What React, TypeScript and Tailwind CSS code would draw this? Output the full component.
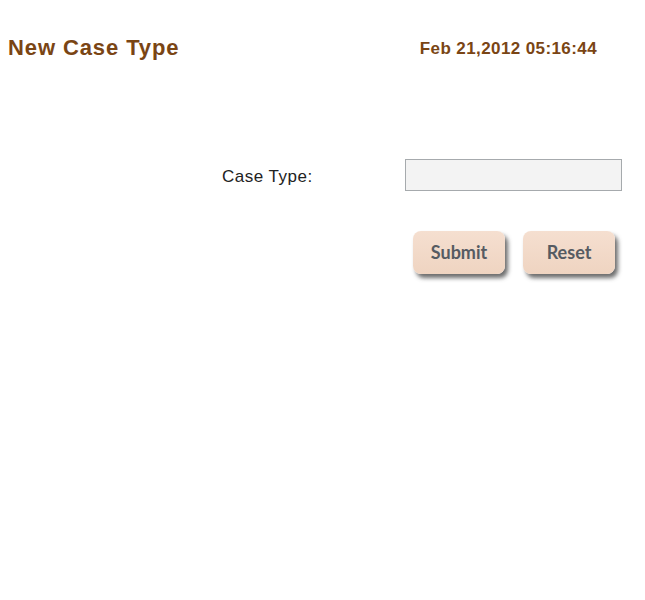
export default function App() {
  return (
    <div className="w-[645px] h-[600px] bg-white font-['Liberation_Sans',Arial,sans-serif]">
      <div className="flex items-center justify-between pt-[33px] pl-2 pr-[48px]">
        <h1 className="text-[22px] font-bold text-[#7a4514] leading-[26px] tracking-[0.9px]">New Case Type</h1>
        <span className="text-[17px] font-bold text-[#7a4514] leading-[26px] pt-[3px] tracking-[0.4px]">Feb 21,2012 05:16:44</span>
      </div>

      <div className="flex items-center mt-[97px]">
        <label className="w-[405px] pl-[222px] text-[17px] text-[#222] leading-[20px] pt-[3px] tracking-[0.5px]">Case Type:</label>
        <input className="w-[217px] h-[32px] bg-[#f3f3f3] border border-[#a6aaad] outline-none" />
      </div>

      <div className="flex gap-[18px] pl-[413px] mt-[40px]">
        {['Submit', 'Reset'].map((label) => (
          <button
            key={label}
            className="w-[92px] h-[43px] rounded-[8px] bg-gradient-to-b from-[#f5dfd0] to-[#efd4c1] shadow-[3px_4px_4px_rgba(60,60,60,0.75)] text-[18px] font-bold text-[#565b62] font-['Lato','Open_Sans',sans-serif]"
          >
            {label}
          </button>
        ))}
      </div>
    </div>
  );
}
